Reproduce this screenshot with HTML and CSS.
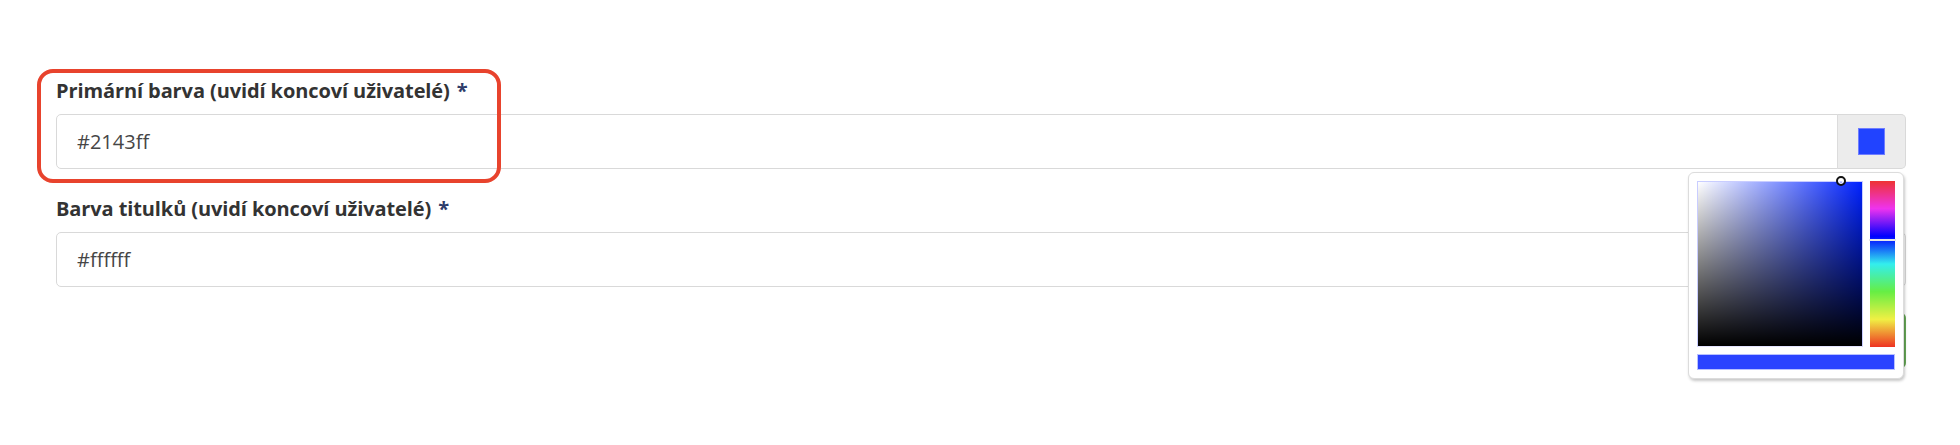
FILE: index.html
```html
<!DOCTYPE html>
<html lang="cs">
<head>
<meta charset="utf-8">
<title>Barvy</title>
<link rel="stylesheet" href="styles.css">
</head>
<body>
<form class="form">
  <div class="group group-primary">
    <label class="label">Primární barva (uvidí koncoví uživatelé) <span class="req">*</span></label>
    <div class="input-group">
      <input class="control" type="text" value="#2143ff">
      <span class="addon"><i class="swatch"></i></span>
    </div>
    <div class="picker">
      <div class="picker-top">
        <div class="sat">
          <div class="sat-white"></div>
          <div class="sat-black"></div>
          <i class="sat-dot"></i>
        </div>
        <div class="hue"><i class="hue-mark"></i></div>
      </div>
      <div class="preview"></div>
    </div>
    <div class="highlight"></div>
  </div>
  <div class="group">
    <label class="label">Barva titulků (uvidí koncoví uživatelé) <span class="req">*</span></label>
    <input class="control control-full" type="text" value="#ffffff">
  </div>
  <div class="actions">
    <button class="btn" type="button">Uložit</button>
  </div>
</form>
</body>
</html>
```
FILE: styles.css
```css
* { box-sizing: border-box; }
html, body { margin: 0; background: #fff; }
html { min-height: 100%; }
body { min-height: 445px; font-family: "Open Sans", "Liberation Sans", sans-serif; color: #333; }

.form {
  padding: 76px 54px 77px 56px;
  display: flex;
  flex-direction: column;
}

.group { position: relative; display: flex; flex-direction: column; margin-bottom: 25px; }
.group + .group { margin-bottom: 26px; }

.label {
  font-size: 20px;
  font-weight: 700;
  line-height: 30px;
  margin-bottom: 8px;
  color: #333;
  letter-spacing: -0.1px;
}
.req { color: #2f3d6b; margin-left: 2px; }

.input-group { display: flex; height: 55px; }

.control {
  flex: 1;
  height: 55px;
  border: 1px solid #d9d9d9;
  border-radius: 5px;
  padding: 0 20px;
  font-family: inherit;
  font-size: 20px;
  color: #464646;
  background: #fff;
  outline: none;
}
.input-group .control { border-radius: 5px 0 0 5px; }
.control-full { width: 100%; flex: none; }

.addon {
  width: 69px;
  display: flex;
  align-items: center;
  justify-content: center;
  background: #ececec;
  border: 1px solid #d9d9d9;
  border-left: 1px solid #dcdcdc;
  border-radius: 0 5px 5px 0;
  margin-left: -1px;
}
.swatch {
  display: block;
  width: 27px;
  height: 27px;
  background: #2143ff;
  border: 1px solid #6f7dff;
}

.highlight {
  position: absolute;
  left: -19px;
  top: -7px;
  width: 464px;
  height: 114px;
  border: 4px solid #e8432d;
  border-radius: 16px;
  pointer-events: none;
}

.picker {
  position: absolute;
  top: 96px;
  right: 2px;
  width: 216px;
  z-index: 10;
  padding: 8px;
  background: #fff;
  border: 1px solid #dcdcdc;
  border-radius: 6px;
  box-shadow: 1px 2px 3px rgba(0,0,0,0.22);
  display: flex;
  flex-direction: column;
  gap: 7px;
}
.picker-top { display: flex; gap: 7px; height: 166px; }

.sat {
  position: relative;
  width: 166px;
  height: 166px;
  background: #0022ff;
  border: 1px solid #c9cdff;
  border-bottom-color: #e4e4ff;
}
.sat-white, .sat-black { position: absolute; inset: 0; }
.sat-white { background: linear-gradient(to right, #fff, rgba(255,255,255,0)); }
.sat-black { background: linear-gradient(to top, #000, rgba(0,0,0,0)); }
.sat-dot {
  position: absolute;
  left: 138px;
  top: -6px;
  width: 10px;
  height: 10px;
  border-radius: 50%;
  border: 2px solid #111;
  box-shadow: inset 0 0 0 1.5px #fff;
  background: transparent;
}

.hue {
  position: relative;
  width: 25px;
  height: 166px;
  background: linear-gradient(to bottom, #ee3333 0%, #ee33ee 16.67%, #0000ff 33.33%, #33eeee 50%, #66ee44 66.67%, #f0f044 83.33%, #ee3322 100%);
}
.hue-mark {
  position: absolute;
  left: -1px;
  right: -1px;
  top: 58px;
  height: 2px;
  background: #e6e6e6;
}

.preview {
  height: 16px;
  background: #2b43ff;
  border: 1px solid #b8c0ff;
}

.actions { display: flex; justify-content: flex-end; }
.btn {
  height: 55px;
  width: 150px;
  border: 0;
  border-radius: 5px;
  background: #67a857;
  color: #fff;
  font-family: inherit;
  font-size: 18px;
}
```
